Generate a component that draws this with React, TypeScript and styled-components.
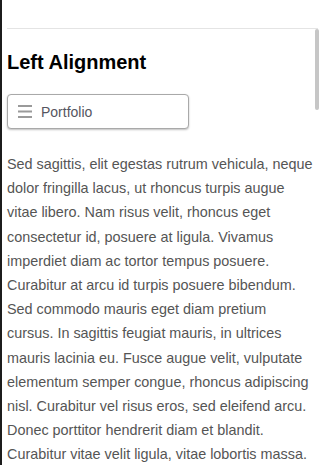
import React from 'react';
import styled, { createGlobalStyle } from 'styled-components';

const Global = createGlobalStyle`
  html, body {
    margin: 0;
    padding: 0;
    background: #fff;
  }
  body {
    font-family: "Liberation Sans", Arial, sans-serif;
  }
`;

const Frame = styled.div`
  position: relative;
  height: 465px;
  overflow: hidden;
  border-left: 2px solid #1c1c1c;
  box-sizing: border-box;
`;

const TopBar = styled.div`
  height: 28px;
  margin-left: 5px;
  margin-right: 2px;
  border-bottom: 1px solid #e4e4e4;
`;

const Content = styled.div`
  padding: 0 3px 0 5px;
  width: 308px;
  box-sizing: content-box;
`;

const Title = styled.h2`
  margin: 22px 0 0;
  font-size: 20px;
  line-height: 23px;
  font-weight: bold;
  color: #000;
`;

const MenuButton = styled.button`
  display: flex;
  align-items: center;
  gap: 9px;
  margin-top: 20px;
  width: 182px;
  height: 35px;
  padding: 0 0 0 10px;
  background: #fff;
  border: 1px solid #a9a9a9;
  border-radius: 4px;
  box-shadow: 0 1px 2px rgba(0, 0, 0, 0.25);
  font-family: "Liberation Sans", Arial, sans-serif;
  font-size: 14px;
  color: #555560;
  cursor: pointer;
`;

const Text = styled.p`
  margin: 23px 0 0;
  font-size: 14.4px;
  line-height: 24.2px;
  color: #555;
`;

const ScrollThumb = styled.div`
  position: absolute;
  top: 29px;
  right: 1px;
  width: 4px;
  height: 81px;
  border-radius: 2px;
  background: #c6c6c6;
`;

const Burger = () => (
  <svg width="14" height="13" viewBox="0 0 14 13">
    <rect x="0" y="0" width="14" height="2" fill="#9a9a9a" />
    <rect x="0" y="5.5" width="14" height="2" fill="#9a9a9a" />
    <rect x="0" y="11" width="14" height="2" fill="#9a9a9a" />
  </svg>
);

const copy =
  'Sed sagittis, elit egestas rutrum vehicula, neque dolor fringilla lacus, ut rhoncus turpis augue vitae libero. Nam risus velit, rhoncus eget consectetur id, posuere at ligula. Vivamus imperdiet diam ac tortor tempus posuere. Curabitur at arcu id turpis posuere bibendum. Sed commodo mauris eget diam pretium cursus. In sagittis feugiat mauris, in ultrices mauris lacinia eu. Fusce augue velit, vulputate elementum semper congue, rhoncus adipiscing nisl. Curabitur vel risus eros, sed eleifend arcu. Donec porttitor hendrerit diam et blandit. Curabitur vitae velit ligula, vitae lobortis massa. Mauris mattis est quis dolor venenatis vitae pharetra diam gravida. Vivamus dignissim, ligula vel ultricies varius, nibh velit pretium leo, vel placerat ipsum risus luctus purus.';

export default function App() {
  return (
    <>
      <Global />
      <Frame>
        <TopBar />
        <Content>
          <Title>Left Alignment</Title>
          <MenuButton type="button">
            <Burger />
            Portfolio
          </MenuButton>
          <Text>{copy}</Text>
        </Content>
        <ScrollThumb />
      </Frame>
    </>
  );
}
